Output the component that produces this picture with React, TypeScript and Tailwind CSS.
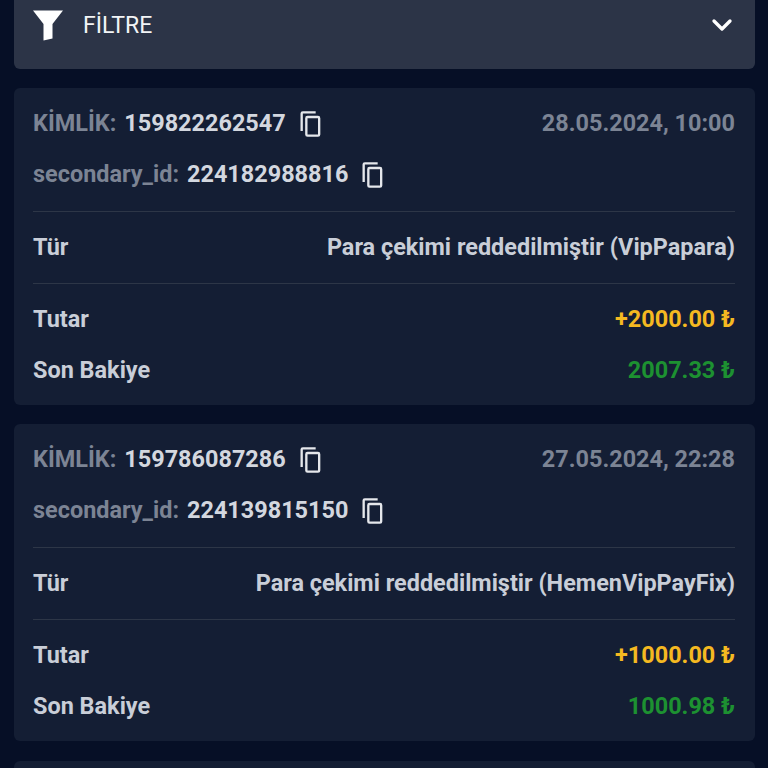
import { ChevronDown } from "lucide-react";

type Transaction = {
  id: string;
  secondaryId: string;
  date: string;
  type: string;
  amount: string;
  balance: string;
};

const transactions: Transaction[] = [
  {
    id: "159822262547",
    secondaryId: "224182988816",
    date: "28.05.2024, 10:00",
    type: "Para çekimi reddedilmiştir (VipPapara)",
    amount: "+2000.00 ₺",
    balance: "2007.33 ₺",
  },
  {
    id: "159786087286",
    secondaryId: "224139815150",
    date: "27.05.2024, 22:28",
    type: "Para çekimi reddedilmiştir (HemenVipPayFix)",
    amount: "+1000.00 ₺",
    balance: "1000.98 ₺",
  },
];

function CopyIcon() {
  return (
    <svg viewBox="0 0 24 24" className="ml-[11px] mt-[1px] h-[28px] w-[28px] text-[#e5e7eb]" fill="currentColor">
      <path d="M16 1H5a2 2 0 0 0-2 2v15h2V3h11V1zm2 4H9a2 2 0 0 0-2 2v14a2 2 0 0 0 2 2h9a2 2 0 0 0 2-2V7a2 2 0 0 0-2-2zm0 16H9V7h9v14z" />
    </svg>
  );
}

function FilterIcon() {
  return (
    <svg viewBox="0 0 30 32" className="h-[32px] w-[30px] text-white" fill="currentColor">
      <path d="M0 1.5h30L19.5 15v14.5l-9 2V15z" />
    </svg>
  );
}

function TransactionCard({ tx }: { tx: Transaction }) {
  return (
    <div className="mt-[19px] rounded-md bg-[#141e34] pb-[9px] pl-[19px] pr-[20px] pt-[10px] first:mt-0">
      <div className="flex h-[51px] items-center justify-between">
        <div className="flex items-center">
          <span className="text-[#7c8494]">KİMLİK:</span>
          <span className="ml-2 text-[#d3d7df]">{tx.id}</span>
          <CopyIcon />
        </div>
        <span className="text-[#7c8494]">{tx.date}</span>
      </div>
      <div className="flex h-[51px] items-center">
        <span className="text-[#7c8494]">secondary_id:</span>
        <span className="ml-2 text-[#d3d7df]">{tx.secondaryId}</span>
        <CopyIcon />
      </div>
      <div className="mt-[11px] flex h-[73px] items-center justify-between border-y border-[#2d3647] text-[#c9ced8]">
        <span>Tür</span>
        <span>{tx.type}</span>
      </div>
      <div className="mt-[10px] flex h-[51px] items-center justify-between">
        <span className="text-[#c9ced8]">Tutar</span>
        <span className="text-[#f5b921]">{tx.amount}</span>
      </div>
      <div className="flex h-[51px] items-center justify-between">
        <span className="text-[#c9ced8]">Son Bakiye</span>
        <span className="text-[#1d9131]">{tx.balance}</span>
      </div>
    </div>
  );
}

export default function App() {
  return (
    <div className="h-[768px] overflow-hidden bg-[#060f26] pl-[14px] pr-[13px] font-['Roboto',sans-serif] text-[23.45px] font-bold leading-none">
      <div className="flex h-[69px] items-start justify-between rounded-b-md bg-[#2c3447] pl-[19px] pr-[17px] pt-[9px]">
        <div className="flex items-center">
          <FilterIcon />
          <span className="ml-[20px] text-[23px] font-normal text-[#f3f4f6]">FİLTRE</span>
        </div>
        <ChevronDown className="h-[32px] w-[32px] text-white" strokeWidth={2.5} />
      </div>
      <div className="mt-[19px]">
        {transactions.map((tx) => (
          <TransactionCard key={tx.id} tx={tx} />
        ))}
        <div className="mt-[20px] h-[60px] rounded-md bg-[#141e34]" />
      </div>
    </div>
  );
}
